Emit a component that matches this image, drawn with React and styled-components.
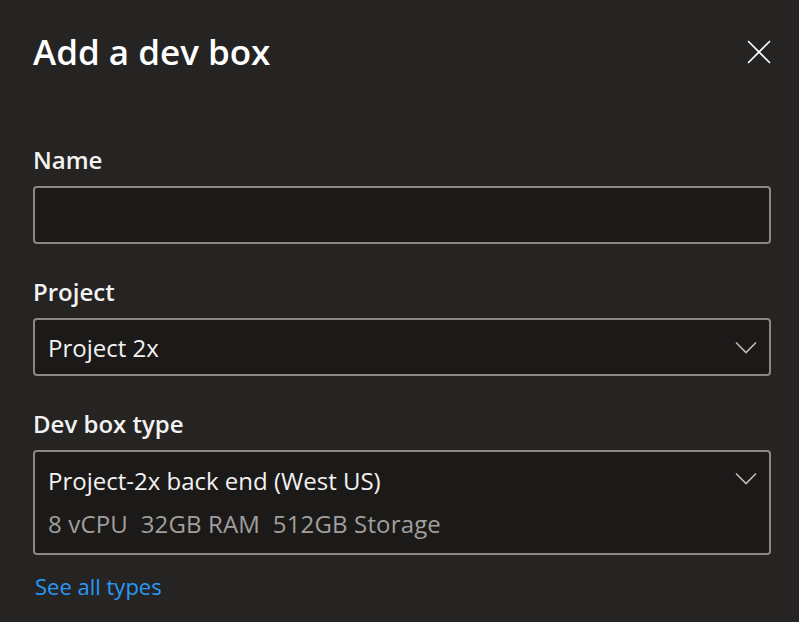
import styled, { createGlobalStyle } from "styled-components"

const Global = createGlobalStyle`
  html, body {
    margin: 0;
    background: #252423;
  }
  body {
    font-family: "Segoe UI", "Open Sans", "Noto Sans", sans-serif;
    color: #f3f2f1;
  }
`

const Panel = styled.div`
  width: 799px;
  height: 622px;
  box-sizing: border-box;
  padding: 28px 28px 0 33px;
  background: #252423;
  overflow: hidden;
`

const Header = styled.div`
  display: flex;
  justify-content: space-between;
  align-items: flex-start;
  margin-bottom: 68px;
`

const Title = styled.h1`
  margin: 0;
  font-size: 35px;
  font-weight: 600;
  line-height: 48px;
  color: #ffffff;
`

const CloseButton = styled.button`
  background: none;
  border: none;
  padding: 0;
  margin: 12px 0 0 0;
  width: 24px;
  height: 24px;
  display: flex;
  align-items: center;
  justify-content: center;
  cursor: pointer;
`

const Field = styled.div`
  display: flex;
  flex-direction: column;
  margin-bottom: 32px;
`

const Label = styled.label`
  font-size: 24px;
  font-weight: 600;
  line-height: 32px;
  margin-bottom: 10px;
  color: #f3f2f1;
`

const Box = styled.div`
  box-sizing: border-box;
  height: ${(p) => p.$height}px;
  border: 2px solid #8a8886;
  border-radius: 4px;
  background: #1b1a19;
  display: flex;
  align-items: ${(p) => (p.$tall ? "flex-start" : "center")};
  justify-content: space-between;
  padding: ${(p) => (p.$tall ? "13px 12px 0 13px" : "2px 12px 0 13px")};
`

const Value = styled.div`
  display: flex;
  flex-direction: column;
  font-size: 24px;
  line-height: 32px;
  color: #f3f2f1;
`

const Sub = styled.span`
  color: #a19f9d;
  margin-top: 11px;
  white-space: pre;
  letter-spacing: 0.15px;
`

const Chevron = styled.svg`
  flex-shrink: 0;
  margin-top: ${(p) => (p.$tall ? "7px" : "-2px")};
`

const Link = styled.a`
  display: block;
  width: fit-content;
  margin-top: -17px;
  margin-left: 2px;
  font-size: 22px;
  line-height: 32px;
  color: #2899f5;
  text-decoration: none;
`

function Caret({ tall }) {
  return (
    <Chevron $tall={tall} width="22" height="13" viewBox="0 0 22 13">
      <polyline points="1,1.5 11,11.5 21,1.5" fill="none" stroke="#bebbb8" strokeWidth="1.6" />
    </Chevron>
  )
}

export default function App() {
  return (
    <Panel>
      <Global />
      <Header>
        <Title>Add a dev box</Title>
        <CloseButton aria-label="Close">
          <svg width="24" height="24" viewBox="0 0 24 24">
            <path d="M1 1 L23 23 M23 1 L1 23" stroke="#ffffff" strokeWidth="1.6" />
          </svg>
        </CloseButton>
      </Header>

      <Field>
        <Label>Name</Label>
        <Box $height={58} />
      </Field>

      <Field>
        <Label>Project</Label>
        <Box $height={58}>
          <Value>Project 2x</Value>
          <Caret />
        </Box>
      </Field>

      <Field>
        <Label>Dev box type</Label>
        <Box $height={105} $tall>
          <Value>
            <span>Project-2x back end (West US)</span>
            <Sub>8 vCPU  32GB RAM  512GB Storage</Sub>
          </Value>
          <Caret tall />
        </Box>
      </Field>

      <Link href="#">See all types</Link>
    </Panel>
  )
}
